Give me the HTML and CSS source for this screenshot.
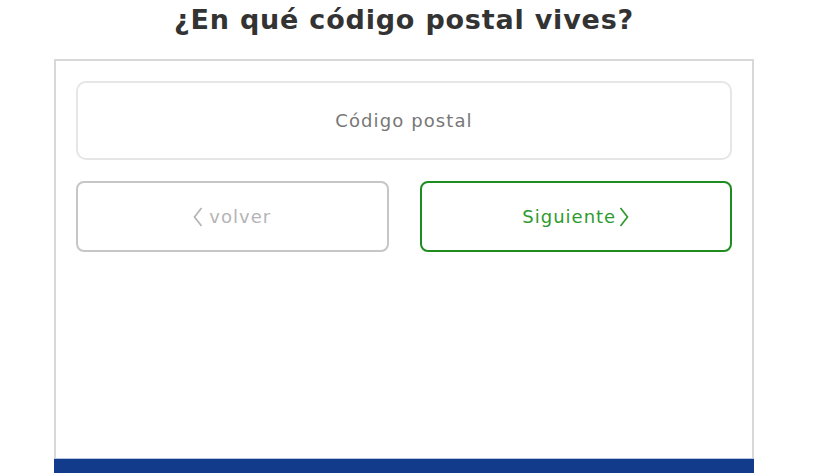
FILE: index.html
```html
<!DOCTYPE html>
<html lang="es">
<head>
<meta charset="utf-8">
<title>Código postal</title>
<link rel="stylesheet" href="styles.css">
</head>
<body>
<div class="page">
  <h1 class="title">¿En qué código postal vives?</h1>
  <div class="card">
    <div class="field">Código postal</div>
    <div class="actions">
      <button class="btn btn-back" type="button">
        <svg class="chev" width="10" height="20" viewBox="0 0 10 20"><path d="M8.5 1 L1.5 10 L8.5 19" fill="none" stroke="currentColor" stroke-width="1.7"/></svg>
        <span>volver</span>
      </button>
      <button class="btn btn-next" type="button">
        <span>Siguiente</span>
        <svg class="chev" width="10" height="20" viewBox="0 0 10 20"><path d="M1.5 1 L8.5 10 L1.5 19" fill="none" stroke="currentColor" stroke-width="1.7"/></svg>
      </button>
    </div>
  </div>
  <div class="band"></div>
</div>
</body>
</html>
```
FILE: styles.css
```css
html, body {
  margin: 0;
  padding: 0;
  background: #ffffff;
}
body {
  font-family: "DejaVu Sans", "Open Sans", sans-serif;
  color: #333333;
}
.page {
  width: 700px;
  margin-left: 54px;
  padding-top: 3px;
}
.title {
  margin: 0 0 22px;
  font-size: 27px;
  line-height: 34px;
  letter-spacing: 0.8px;
  font-weight: 700;
  text-align: center;
  color: #333333;
}
.card {
  border: 2px solid #d8d8d8;
  border-bottom: none;
  height: 399px;
  padding: 20px 20px 0;
  box-sizing: border-box;
}
.field {
  height: 79px;
  border: 2px solid #e6e6e6;
  border-radius: 10px;
  box-sizing: border-box;
  display: flex;
  align-items: center;
  justify-content: center;
  font-size: 18px;
  letter-spacing: 1.1px;
  color: #777777;
}
.actions {
  margin-top: 21px;
  display: grid;
  grid-template-columns: 1fr 1fr;
  column-gap: 31px;
}
.btn {
  height: 71px;
  border-radius: 8px;
  background: #ffffff;
  box-sizing: border-box;
  display: flex;
  align-items: center;
  justify-content: center;
  gap: 6px;
  font-family: "DejaVu Sans", "Open Sans", sans-serif;
  font-size: 18px;
  letter-spacing: 1px;
  padding: 0;
}
.btn-back {
  border: 2px solid #c6c6c6;
  color: #b4b4b4;
}
.btn-next {
  border: 2px solid #1f8c1f;
  color: #2f9a2f;
  gap: 3px;
}
.chev {
  display: block;
}
.band {
  height: 15px;
  background: #133b8c;
  border-top: 1px solid #b7c5e3;
}
```
